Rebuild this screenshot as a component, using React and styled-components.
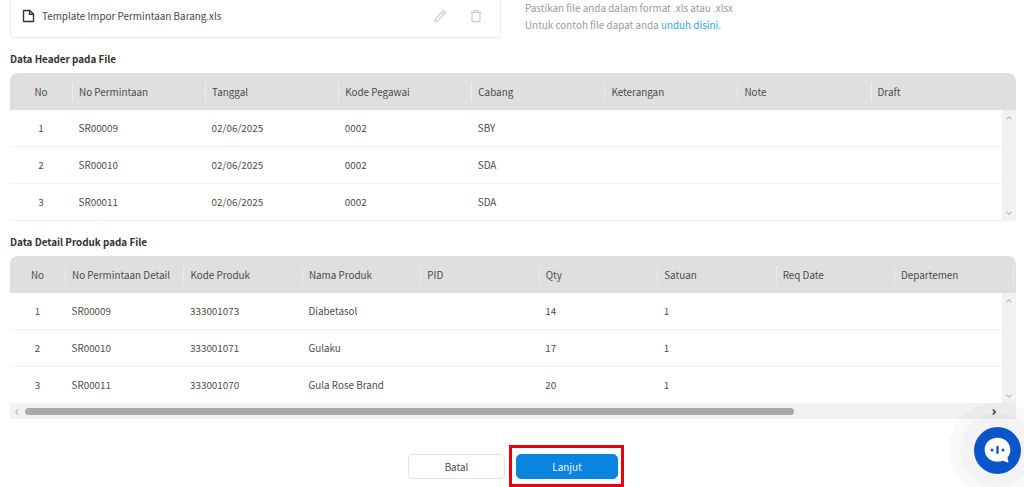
import React from 'react';
import styled, { createGlobalStyle } from 'styled-components';

const Global = createGlobalStyle`
  html, body { margin: 0; padding: 0; background: #fff; height: 100%; overflow: hidden; }
  body { font-family: "Noto Sans CJK JP", "Noto Sans", sans-serif; font-size: 10px; color: #4a4a4a; }
`;

const Page = styled.div`
  position: relative;
  width: 1024px;
  height: 487px;
  overflow: hidden;
  padding: 0 8px 0 10px;
  box-sizing: border-box;
`;

const TopRow = styled.div`
  display: flex;
  height: 38px;
  gap: 24px;
`;

const FileCard = styled.div`
  width: 491px;
  height: 38px;
  box-sizing: border-box;
  display: flex;
  align-items: center;
  padding: 0 17px 6px 11px;
  border: 1px solid #ececec;
  border-top: none;
  border-radius: 0 0 4px 4px;
  box-shadow: 0 1px 1px rgba(0,0,0,.03);
`;

const FileName = styled.span`
  flex: 1;
  margin-left: 7px;
  font-size: 9.9px;
  line-height: 16px;
  color: #474747;
`;

const ActionIcon = styled.svg`
  width: 14px;
  height: 14px;
  margin-left: 22px;
  fill: none;
  stroke: #cfcfcf;
  stroke-width: 1.3;
  stroke-linecap: round;
  stroke-linejoin: round;
`;

const FileIcon = styled.svg`
  width: 13px;
  height: 14px;
  fill: none;
  stroke: #333;
  stroke-width: 1.4;
  stroke-linejoin: round;
`;

const Hint = styled.div`
  font-size: 9.9px;
  line-height: 16.5px;
  color: #9a9a9a;
`;

const Link = styled.span`
  color: #2ea6ea;
`;

const SectionTitle = styled.div`
  font-size: 9.85px;
  font-weight: 700;
  line-height: 16px;
  color: #333;
  margin-top: ${p => p.$top}px;
  margin-bottom: ${p => p.$bottom}px;
`;

const Table = styled.div`
  position: relative;
  width: 1006px;
  overflow: hidden;
  border-radius: 8px 8px 0 0;
`;

const HeaderRow = styled.div`
  display: grid;
  grid-template-columns: ${p => p.$cols};
  height: 37px;
  align-items: center;
  background: #dfdfdf;
`;

const HeadCell = styled.div`
  height: 18px;
  line-height: 18px;
  font-size: 9.9px;
  color: #4b4b4b;
  white-space: nowrap;
  padding-left: 6px;
  border-left: 1px solid #ececec;
  ${p => p.$center && `
    border-left: none;
    padding-left: 0;
    text-align: center;
  `}
`;

const Body = styled.div`
  display: flex;
  flex-direction: column;
  width: ${p => p.$width}px;
`;

const Viewport = styled.div`
  display: flex;
`;

const Row = styled.div`
  display: grid;
  grid-template-columns: ${p => p.$cols};
  height: ${p => p.$h}px;
  box-sizing: border-box;
  align-items: center;
  border-bottom: 1px solid #f3f3f3;
`;

const Cell = styled.div`
  font-size: 9.9px;
  color: #4d4d4d;
  white-space: nowrap;
  padding-left: 6.5px;
  ${p => p.$center && `
    padding-left: 0;
    text-align: center;
  `}
`;

const VScroll = styled.div`
  width: 14px;
  background: #f1f1f1;
  display: flex;
  flex-direction: column;
  justify-content: space-between;
  align-items: center;
  padding: 4px 0;
  box-sizing: border-box;
`;

const HScroll = styled.div`
  height: 15px;
  background: #f1f1f1;
  display: flex;
  align-items: center;
  padding: 0 18px 0 3px;
`;

const Thumb = styled.div`
  width: 769px;
  height: 7px;
  margin-left: 4px;
  border-radius: 4px;
  background: #a9a9a9;
`;

const Spacer = styled.div`
  flex: 1;
`;

const Chevron = styled.svg`
  width: 8px;
  height: 8px;
  fill: none;
  stroke: ${p => p.$color || '#bdbdbd'};
  stroke-width: ${p => p.$w || 1.2};
`;

const Actions = styled.div`
  display: flex;
  justify-content: center;
  gap: 11px;
  margin-top: 35px;
`;

const Button = styled.button`
  display: block;
  width: ${p => p.$w}px;
  height: 25px;
  box-sizing: border-box;
  border-radius: 5px;
  font-family: inherit;
  font-size: 9.9px;
  padding: 0;
  border: 1px solid ${p => (p.$primary ? '#0a84de' : '#e2e2e2')};
  background: ${p => (p.$primary ? '#0a84de' : '#fff')};
  color: ${p => (p.$primary ? '#f2f8fd' : '#4a4a4a')};
`;

const Highlighted = styled.div`
  position: relative;
  &::after {
    content: '';
    position: absolute;
    left: -7px;
    right: -6px;
    top: -9px;
    bottom: -8px;
    border: 3px solid #e8000d;
    pointer-events: none;
  }
`;

const ChatHalo = styled.div`
  position: absolute;
  right: -21px;
  top: 402px;
  width: 96px;
  height: 96px;
  border-radius: 50%;
  background: rgba(0,0,0,.025);
  display: flex;
  align-items: center;
  justify-content: center;
`;

const ChatRing = styled.div`
  width: 74px;
  height: 74px;
  border-radius: 50%;
  background: rgba(0,0,0,.025);
  display: flex;
  align-items: center;
  justify-content: center;
`;

const ChatButton = styled.div`
  width: 47px;
  height: 47px;
  border-radius: 50%;
  background: #0a55c9;
  display: flex;
  align-items: center;
  justify-content: center;
`;

const ChatGlyph = styled.svg`
  width: 35px;
  height: 35px;
`;

const head1 = ['No Permintaan', 'Tanggal', 'Kode Pegawai', 'Cabang', 'Keterangan', 'Note', 'Draft'];
const cols1 = '62px repeat(7, 133.1px)';
const rows1 = [
  ['1', 'SR00009', '02/06/2025', '0002', 'SBY'],
  ['2', 'SR00010', '02/06/2025', '0002', 'SDA'],
  ['3', 'SR00011', '02/06/2025', '0002', 'SDA'],
];
const heights1 = [37, 37, 37];

const head2 = ['No Permintaan Detail', 'Kode Produk', 'Nama Produk', 'PID', 'Qty', 'Satuan', 'Req Date', 'Departemen', ''];
const cols2 = '55px repeat(9, 118.45px)';
const rows2 = [
  ['1', 'SR00009', '333001073', 'Diabetasol', '', '14', '1'],
  ['2', 'SR00010', '333001071', 'Gulaku', '', '17', '1'],
  ['3', 'SR00011', '333001070', 'Gula Rose Brand', '', '20', '1'],
];
const heights2 = [37, 37, 37];

const Up = () => <Chevron viewBox="0 0 8 8"><path d="M1.5 5.2 4 2.8l2.500 2.400" /></Chevron>;
const Down = () => <Chevron viewBox="0 0 8 8"><path d="M1.5 2.8 4 5.2l2.500-2.400" /></Chevron>;

function DataTable({ cols, head, rows, heights, bodyWidth }) {
  return (
    <>
      <HeaderRow $cols={cols}>
        <HeadCell $center>No</HeadCell>
        {head.map((h, i) => <HeadCell key={i}>{h}</HeadCell>)}
      </HeaderRow>
      <Viewport>
        <Body $width={bodyWidth}>
          {rows.map((r, i) => (
            <Row key={i} $cols={cols} $h={heights[i]}>
              {r.map((c, j) => <Cell key={j} $center={j === 0}>{c}</Cell>)}
            </Row>
          ))}
        </Body>
        <VScroll><Up /><Down /></VScroll>
      </Viewport>
    </>
  );
}

export default function App() {
  return (
    <Page>
      <Global />
      <TopRow>
        <FileCard>
          <FileIcon viewBox="0 0 13 14">
            <path d="M1.500 1.500h6.200l3.800 3.600v7.400h-10z" />
            <path d="M7.500 1.500v3.800h4" />
          </FileIcon>
          <FileName>Template Impor Permintaan Barang.xls</FileName>
          <ActionIcon viewBox="0 0 14 14">
            <path d="M2 12.500l.7-3L9.800 2.200a1.200 1.200 0 0 1 1.700 0l.4.4a1.200 1.200 0 0 1 0 1.700L4.800 11.600z" />
            <path d="M8.600 3.500l2 2" />
          </ActionIcon>
          <ActionIcon viewBox="0 0 14 14">
            <path d="M2 3.500h10" />
            <path d="M5 3.200V1.600h4v1.600" />
            <path d="M3 3.500v9h8v-9" />
          </ActionIcon>
        </FileCard>
        <Hint>
          Pastikan file anda dalam format .xls atau .xlsx
          <br />
          Untuk contoh file dapat anda <Link>unduh disini.</Link>
        </Hint>
      </TopRow>

      <SectionTitle $top={13} $bottom={6}>Data Header pada File</SectionTitle>
      <Table>
        <DataTable cols={cols1} head={head1} rows={rows1} heights={heights1} bodyWidth={992} />
      </Table>

      <SectionTitle $top={13} $bottom={6}>Data Detail Produk pada File</SectionTitle>
      <Table>
        <DataTable cols={cols2} head={head2} rows={rows2} heights={heights2} bodyWidth={992} />
        <HScroll>
          <Chevron viewBox="0 0 8 8"><path d="M5.200 1.500 2.800 4l2.400 2.500" /></Chevron>
          <Thumb />
          <Spacer />
          <Chevron viewBox="0 0 8 8" $color="#444" $w={1.6}><path d="M2.800 1.500 5.200 4 2.800 6.500" /></Chevron>
        </HScroll>
      </Table>

      <Actions>
        <Button $w={97}>Batal</Button>
        <Highlighted>
          <Button $primary $w={102}>Lanjut</Button>
        </Highlighted>
      </Actions>

      <ChatHalo>
        <ChatRing>
          <ChatButton>
            <ChatGlyph viewBox="0 0 30 30">
              <path d="M15 4c6.400 0 11 4.500 11 10.300 0 2.600-.9 5-2.500 6.800l1 4.500-5-1.900c-1.400.5-2.900.8-4.500.8-6.400 0-11-4.500-11-10.200C4 8.500 8.600 4 15 4z" fill="#fff" />
              <circle cx="10.300" cy="14.500" r="1.300" fill="#0a55c9" />
              <rect x="14" y="11" width="2" height="7" rx="1" fill="#0a55c9" />
              <circle cx="19.700" cy="14.500" r="1.300" fill="#0a55c9" />
            </ChatGlyph>
          </ChatButton>
        </ChatRing>
      </ChatHalo>
    </Page>
  );
}
